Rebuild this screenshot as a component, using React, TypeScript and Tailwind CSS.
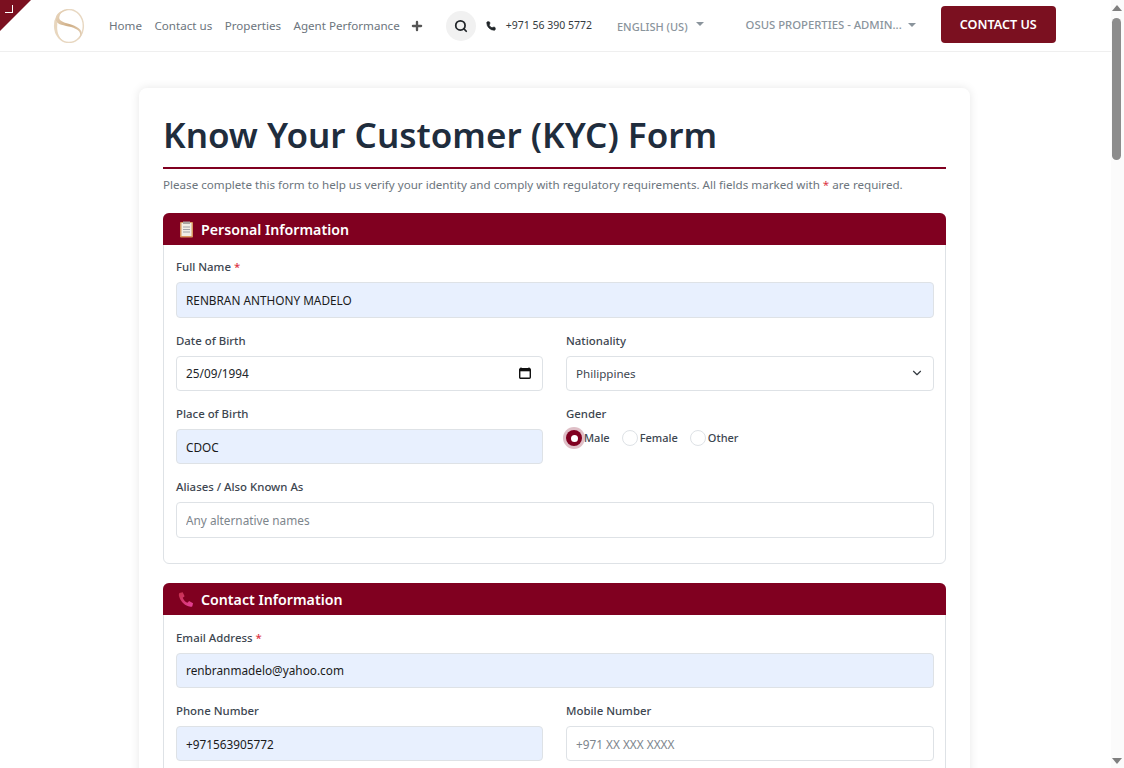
import { ChevronDown, Phone, Plus, Search } from 'lucide-react';

const inputClass = 'h-[35.33px] w-full rounded border border-[#dee2e6] px-[9px] text-[11.8px] outline-none';

function Label({ text, required }: { text: string; required?: boolean }) {
  return (
    <div className="mb-[6px] h-[18px] text-[11.4px] font-medium leading-[18px] text-[#3d4650]">
      {text}
      {required && <span className="text-[#dc3545]"> *</span>}
    </div>
  );
}

function Field({ label, value, placeholder, required, filled }: { label: string; value?: string; placeholder?: string; required?: boolean; filled?: boolean }) {
  return (
    <div className="min-w-0">
      <Label text={label} required={required} />
      <input
        readOnly
        value={value ?? ''}
        placeholder={placeholder}
        className={`${inputClass} ${filled ? 'bg-[#e8f0fe] text-[#1a1a1a]' : 'bg-white text-[#212529]'} placeholder:text-[#7d858c]`}
      />
    </div>
  );
}

function Radio({ label, checked }: { label: string; checked?: boolean }) {
  return (
    <div className="flex items-center gap-[2px]">
      {checked ? (
        <span className="flex h-4 w-4 items-center justify-center rounded-full bg-[#800020] shadow-[0_0_0_3px_rgba(128,0,32,0.25)]">
          <span className="h-[7px] w-[7px] rounded-full bg-white" />
        </span>
      ) : (
        <span className="h-4 w-4 rounded-full border border-[#dee2e6] bg-white" />
      )}
      <span className="text-[11px] font-medium text-[#3d4650]">{label}</span>
    </div>
  );
}

function ClipboardEmoji() {
  return (
    <svg width="15" height="17" viewBox="0 0 15 17">
      <rect x="1" y="1" width="13" height="15.5" rx="1" fill="#d9985f" />
      <rect x="2.5" y="2" width="10" height="13" fill="#f1ede6" />
      <rect x="4" y="0.5" width="7" height="2.5" fill="#a9a4a0" />
      <path d="M4 6h7M4 8.5h7M4 11h7" stroke="#a3a3a8" strokeWidth="1" />
    </svg>
  );
}

function PhoneEmoji() {
  return (
    <svg width="17" height="17" viewBox="0 0 17 17">
      <defs>
        <linearGradient id="ph" x1="0" y1="0" x2="1" y2="1">
          <stop offset="0" stopColor="#c4304a" />
          <stop offset="1" stopColor="#e8409c" />
        </linearGradient>
      </defs>
      <path d="M1.5 1.5 L5 .8 L7 5 L5 6.6 C5.8 9 7.6 11 10 12 L11.8 10.2 L16 12.6 L15.2 15.6 C14.6 16.4 13 16.4 11 15.8 C6 14.2 2.2 9.6 1 4.6 C.8 3.4 1 2.2 1.5 1.5Z" fill="url(#ph)" />
    </svg>
  );
}

function SectionHeader({ icon, title }: { icon: React.ReactNode; title: string }) {
  return (
    <div className="-mx-px -mt-px flex h-8 items-center gap-[7px] rounded-t-md bg-[#800020] pl-[15px] text-[14.2px] font-semibold text-white">
      <span className="flex w-4 justify-center">{icon}</span>
      <span className="pt-px">{title}</span>
    </div>
  );
}

function Logo() {
  return (
    <svg width="32" height="34" viewBox="2 1 28 32">
      <defs>
        <linearGradient id="lg" x1="0" y1="0" x2="1" y2="1">
          <stop offset="0" stopColor="#ecdcc6" />
          <stop offset="0.5" stopColor="#cfae86" />
          <stop offset="1" stopColor="#e9d9c4" />
        </linearGradient>
      </defs>
      <ellipse cx="16" cy="17" rx="13.5" ry="15.5" fill="none" stroke="#e8d8c2" strokeWidth="1.4" />
      <path d="M2.5 11 C2.5 20 2.5 27 12 32 C5 27 4.5 21 5 15 C5 13 4 12 2.5 11Z" fill="#e8d6bd" />
      <path d="M17 1.5 C8 1.5 3 6 3.5 11 C4 16 12 16 18 18 C24 20 27 22 26.5 26 C26 30 21 32.5 16 32.5 C22 32 28 29 28 24 C28 19 20 16 14 14.5 C9 13 6 11 7 8 C8 4 12 2 17 1.5Z" fill="url(#lg)" />
    </svg>
  );
}

export default function App() {
  return (
    <div className="relative flex h-[768px] w-[1124px] overflow-hidden bg-white font-['Noto_Sans','Open_Sans',sans-serif]">
      {/* corner ribbon */}
      <div className="absolute left-0 top-0 z-10 h-[31px] w-[31px] bg-[#7b1020] [clip-path:polygon(0_0,100%_0,0_100%)]">
        <div className="ml-[5px] mt-[5px] h-2 w-2 border-b-[1.5px] border-r-[1.5px] border-white" />
      </div>

      <div className="min-w-0 flex-1">
        {/* Header */}
        <header className="flex h-[52px] items-center border-b border-[#efefef] pl-[53px]">
          <Logo />
          <nav className="ml-[24px] flex items-center gap-[12.5px] text-[11.6px] text-[#6c757d]">
            <span>Home</span>
            <span>Contact us</span>
            <span>Properties</span>
            <span>Agent Performance</span>
          </nav>
          <Plus size={14} strokeWidth={4} className="ml-[10px] text-[#555]" />
          <div className="ml-[22px] flex h-[30px] w-[30px] items-center justify-center rounded-full bg-[#f1f1f1]">
            <Search size={14} strokeWidth={3} className="text-[#212529]" />
          </div>
          <Phone size={10} fill="#212529" className="ml-[10px] text-[#212529]" />
          <span className="ml-[10px] text-[10.5px] text-[#343a40]">+971 56 390 5772</span>
          <span className="ml-[25px] mt-[3px] text-[11px] font-medium text-[#8a949c]">ENGLISH (US)</span>
          <span className="mb-[3px] ml-2 h-0 w-0 border-x-[4px] border-t-[4px] border-x-transparent border-t-[#8a949c]" />
          <span className="ml-[42px] text-[11.3px] font-medium text-[#8a949c]">OSUS PROPERTIES - ADMIN...</span>
          <span className="mb-[1px] ml-[6px] h-0 w-0 border-x-[4px] border-t-[4px] border-x-transparent border-t-[#8a949c]" />
          <div className="mb-[2px] ml-[25px] flex h-[37px] w-[115px] items-center justify-center rounded bg-[#7b1020] pt-[2px] text-[12.6px] font-semibold text-white">
            CONTACT US
          </div>
        </header>

        {/* Form card */}
        <main className="ml-[139px] mt-9 w-[831px] rounded-lg bg-white px-6 pt-5 shadow-[0_0_10px_rgba(0,0,0,0.1)]">
          <h1 className="h-[61px] border-b-2 border-[#800020] text-[35px] font-semibold leading-[53px] text-[#1f2d3d]">
            Know Your Customer (KYC) Form
          </h1>
          <p className="mt-[7px] text-[11.62px] leading-[18px] text-[#6c757d]">
            Please complete this form to help us verify your identity and comply with regulatory requirements. All fields marked with <span className="text-[#dc3545]">*</span> are required.
          </p>

          <section className="mt-[19px] rounded-md border border-[#dee2e6]">
            <SectionHeader icon={<ClipboardEmoji />} title="Personal Information" />
            <div className="flex flex-col gap-[14px] pb-[25.4px] pl-3 pr-[11px] pt-[13.4px]">
              <Field label="Full Name" required value="RENBRAN ANTHONY MADELO" filled />
              <div className="grid grid-cols-[367px_1fr] gap-x-[23px]">
                <div className="min-w-0">
                  <Label text="Date of Birth" />
                  <div className="flex h-[35.33px] items-center justify-between rounded border border-[#dee2e6] bg-white pl-[9px] pr-[11px] text-[11.8px] text-[#212529]">
                    25/09/1994
                    <svg width="12" height="12" viewBox="0 0 12 12">
                      <path d="M2 .5v2M10 .5v2" stroke="#111" strokeWidth="1.2" />
                      <rect x=".7" y="1.7" width="10.6" height="9.6" rx="1" fill="none" stroke="#111" strokeWidth="1.4" />
                      <rect x=".7" y="1.7" width="10.6" height="2.6" fill="#111" />
                    </svg>
                  </div>
                </div>
                <div className="min-w-0">
                  <Label text="Nationality" />
                  <div className="flex h-[35.33px] items-center justify-between rounded border border-[#dee2e6] bg-white px-[9px] text-[11.6px] text-[#3d4650]">
                    Philippines
                    <ChevronDown size={14} className="text-[#343a40]" />
                  </div>
                </div>
              </div>
              <div className="grid grid-cols-[367px_1fr] gap-x-[23px]">
                <Field label="Place of Birth" value="CDOC" filled />
                <div className="min-w-0">
                  <Label text="Gender" />
                  <div className="mt-[2px] flex h-[18px] items-center gap-3">
                    <Radio label="Male" checked />
                    <Radio label="Female" />
                    <Radio label="Other" />
                  </div>
                </div>
              </div>
              <Field label="Aliases / Also Known As" placeholder="Any alternative names" />
            </div>
          </section>

          <section className="mt-[19.3px] rounded-md border border-[#dee2e6]">
            <SectionHeader icon={<PhoneEmoji />} title="Contact Information" />
            <div className="flex flex-col gap-[14px] pb-6 pl-3 pr-[11px] pt-[13.4px]">
              <Field label="Email Address" required value="renbranmadelo@yahoo.com" filled />
              <div className="grid grid-cols-[367px_1fr] gap-x-[23px]">
                <Field label="Phone Number" value="+971563905772" filled />
                <Field label="Mobile Number" placeholder="+971 XX XXX XXXX" />
              </div>
            </div>
          </section>
        </main>
      </div>

      {/* Scrollbar */}
      <aside className="flex w-[13px] shrink-0 flex-col items-center bg-[#fbfbfb] pl-px pr-[3px]">
        <span className="mt-[5px] h-0 w-0 border-x-[5px] border-b-[6px] border-x-transparent border-b-[#7f7f7f]" />
        <span className="mt-[7px] h-[142px] w-[9px] shrink-0 rounded-full bg-[#8c8c8c]" />
        <span className="mb-[4px] mt-auto h-0 w-0 border-x-[5px] border-t-[6px] border-x-transparent border-t-[#7f7f7f]" />
      </aside>
    </div>
  );
}
